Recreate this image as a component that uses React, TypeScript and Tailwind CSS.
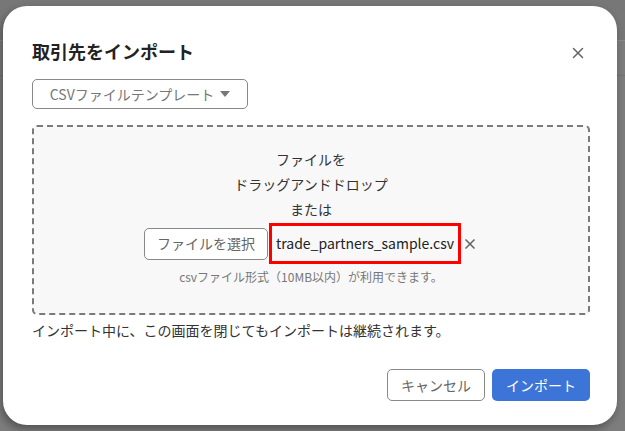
import { X } from "lucide-react";

const font = { fontFamily: '"Noto Sans CJK JP", "Noto Sans", sans-serif' };

export default function App() {
  return (
    <div className="relative w-[625px] h-[431px] overflow-hidden bg-[#7d7d7d]" style={font}>
      {/* dimmed page behind */}
      <div className="absolute inset-x-0 top-0 h-[40px] bg-[#777]" />
      <div className="absolute inset-x-0 top-[40px] h-px bg-[#8a8a8a]" />
      <div className="absolute inset-x-0 top-[75px] h-px bg-[#727272]" />

      <div className="relative ml-[3px] mt-[6px] w-[614px] h-[419px] rounded-[24px] bg-white shadow-[-2px_4px_8px_rgba(0,0,0,0.35)] pl-[29px] pr-[27px] pt-[32px] flex flex-col">
        <div className="flex items-center justify-between">
          <h2 className="text-[18px] leading-[27px] font-bold text-[#222]">取引先をインポート</h2>
          <X className="w-[18px] h-[18px] text-[#666] mr-[3px] mt-[2px]" strokeWidth={2} />
        </div>

        <button className="mt-[14px] self-start h-[30px] w-[216px] rounded-[5px] border border-[#888] text-[14px] text-[#777] flex items-center justify-center gap-[6px]">
          CSVファイルテンプレート
          <span className="w-0 h-0 border-l-[5px] border-r-[5px] border-t-[6px] border-l-transparent border-r-transparent border-t-[#777]" />
        </button>

        <div className="mt-[16px] h-[190px] rounded-[5px] border-2 border-dashed border-[#7a7a7a] bg-[#f8f8f8] flex flex-col items-center pt-[20px]">
          <div className="text-[14px] leading-[25px] text-[#333] text-center">
            <p>ファイルを</p>
            <p>ドラッグアンドドロップ</p>
            <p>または</p>
          </div>
          <div className="mt-[1px] flex items-center">
            <button className="h-[32px] px-[12px] rounded-[5px] border border-[#888] bg-white text-[14px] text-[#666]">
              ファイルを選択
            </button>
            <span className="ml-px h-[41px] px-[4px] border-[3px] border-[#ff0000] flex items-center text-[14px] text-[#222]">
              trade_partners_sample.csv
            </span>
            <X className="w-[16px] h-[16px] text-[#666] ml-px" strokeWidth={2.5} />
          </div>
          <p className="mt-[4px] text-[12px] text-[#777]">csvファイル形式（10MB以内）が利用できます。</p>
        </div>

        <p className="mt-[4px] text-[14px] leading-[22px] text-[#333]">インポート中に、この画面を閉じてもインポートは継続されます。</p>

        <div className="mt-auto mb-[24px] flex justify-end gap-[7px]">
          <button className="h-[32px] w-[98px] rounded-[5px] border border-[#888] bg-white text-[14px] text-[#666]">キャンセル</button>
          <button className="h-[32px] w-[98px] rounded-[5px] bg-[#3d74d7] text-[14px] text-white">インポート</button>
        </div>
      </div>
    </div>
  );
}
